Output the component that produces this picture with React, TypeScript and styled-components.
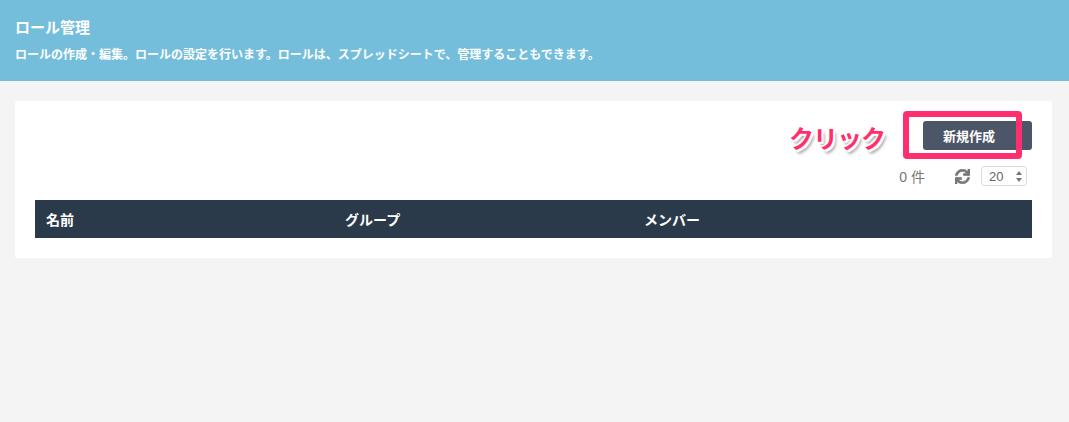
import React from "react";
import styled, { createGlobalStyle } from "styled-components";
import { FaSync } from "react-icons/fa";

const fontStack = `"Liberation Sans", "Noto Sans CJK JP", sans-serif`;

const GlobalStyle = createGlobalStyle`
  html, body {
    margin: 0;
    padding: 0;
    background-color: #f4f4f4;
    font-family: ${fontStack};
  }
`;

const Page = styled.div`
  min-height: 422px;
  background-color: #f4f4f4;
  overflow: hidden;
`;

const Header = styled.header`
  height: 81px;
  box-sizing: border-box;
  padding: 18px 15px 0;
  background-color: #75bedb;
  color: #fff;
`;

const Title = styled.h1`
  margin: 0;
  font-size: 15px;
  line-height: 20px;
  font-weight: 700;
`;

const Description = styled.p`
  margin: 9px 0 0;
  font-size: 12px;
  line-height: 17px;
  font-weight: 700;
`;

const Card = styled.section`
  margin: 20px 17px 0 15px;
  padding: 20px;
  background-color: #fff;
  border-radius: 2px;
`;

const Toolbar = styled.div`
  position: relative;
  display: flex;
  justify-content: flex-end;
`;

const CreateButton = styled.button`
  width: 109px;
  height: 29px;
  padding: 0 17px 0 0;
  border: none;
  border-radius: 3px;
  background-color: #4d5568;
  color: #fff;
  font-family: ${fontStack};
  font-size: 13px;
  font-weight: 700;
`;

const Highlight = styled.div`
  position: absolute;
  top: -10px;
  right: 10px;
  width: 119px;
  height: 48px;
  box-sizing: border-box;
  border: 6px solid #ff2e6f;
  border-radius: 4px;
`;

const ClickLabel = styled.span`
  position: absolute;
  top: 2px;
  right: 147px;
  color: #ff2e6f;
  font-size: 25px;
  line-height: 32px;
  font-weight: 700;
  letter-spacing: -1px;
  text-shadow: 2px 2px 0 #fff, -1px -1px 0 #fff, 1px -1px 0 #fff, -1px 1px 0 #fff,
    3px 4px 3px rgba(0, 0, 0, 0.35);
`;

const Pager = styled.div`
  display: flex;
  align-items: center;
  justify-content: flex-end;
  height: 22px;
  margin-top: 15px;
  padding-right: 5px;
  color: #777;
`;

const Count = styled.span`
  font-size: 14px;
  margin-right: 30px;
`;

const RefreshIcon = styled(FaSync)`
  width: 15px;
  height: 15px;
  margin-right: 11px;
  color: #777;
  stroke: #777;
  stroke-width: 24px;
`;

const PageSize = styled.div`
  display: flex;
  align-items: center;
  justify-content: space-between;
  width: 46px;
  height: 20px;
  box-sizing: border-box;
  padding: 0 4px 0 7px;
  border: 1px solid #d9d9d9;
  border-radius: 4px;
  color: #666;
  font-size: 13px;
`;

const Steppers = styled.svg`
  width: 6px;
  height: 11px;
  fill: #777;
`;

const Table = styled.div`
  display: grid;
  grid-template-columns: 299px 299px 1fr;
  align-items: center;
  height: 38px;
  margin-top: 13px;
  padding-left: 11px;
  background-color: #2a3a4a;
  color: #fff;
  font-size: 14px;
  font-weight: 700;
`;

const App = () => {
  return (
    <Page>
      <GlobalStyle />
      <Header>
        <Title>ロール管理</Title>
        <Description>
          ロールの作成・編集。ロールの設定を行います。ロールは、スプレッドシートで、管理することもできます。
        </Description>
      </Header>
      <Card>
        <Toolbar>
          <CreateButton>新規作成</CreateButton>
          <Highlight />
          <ClickLabel>クリック</ClickLabel>
        </Toolbar>
        <Pager>
          <Count>0 件</Count>
          <RefreshIcon />
          <PageSize>
            20
            <Steppers viewBox="0 0 6 11">
              <path d="M3 0 6 4H0Z" />
              <path d="M3 11 0 7H6Z" />
            </Steppers>
          </PageSize>
        </Pager>
        <Table>
          <span>名前</span>
          <span>グループ</span>
          <span>メンバー</span>
        </Table>
      </Card>
    </Page>
  );
};

export default App;
